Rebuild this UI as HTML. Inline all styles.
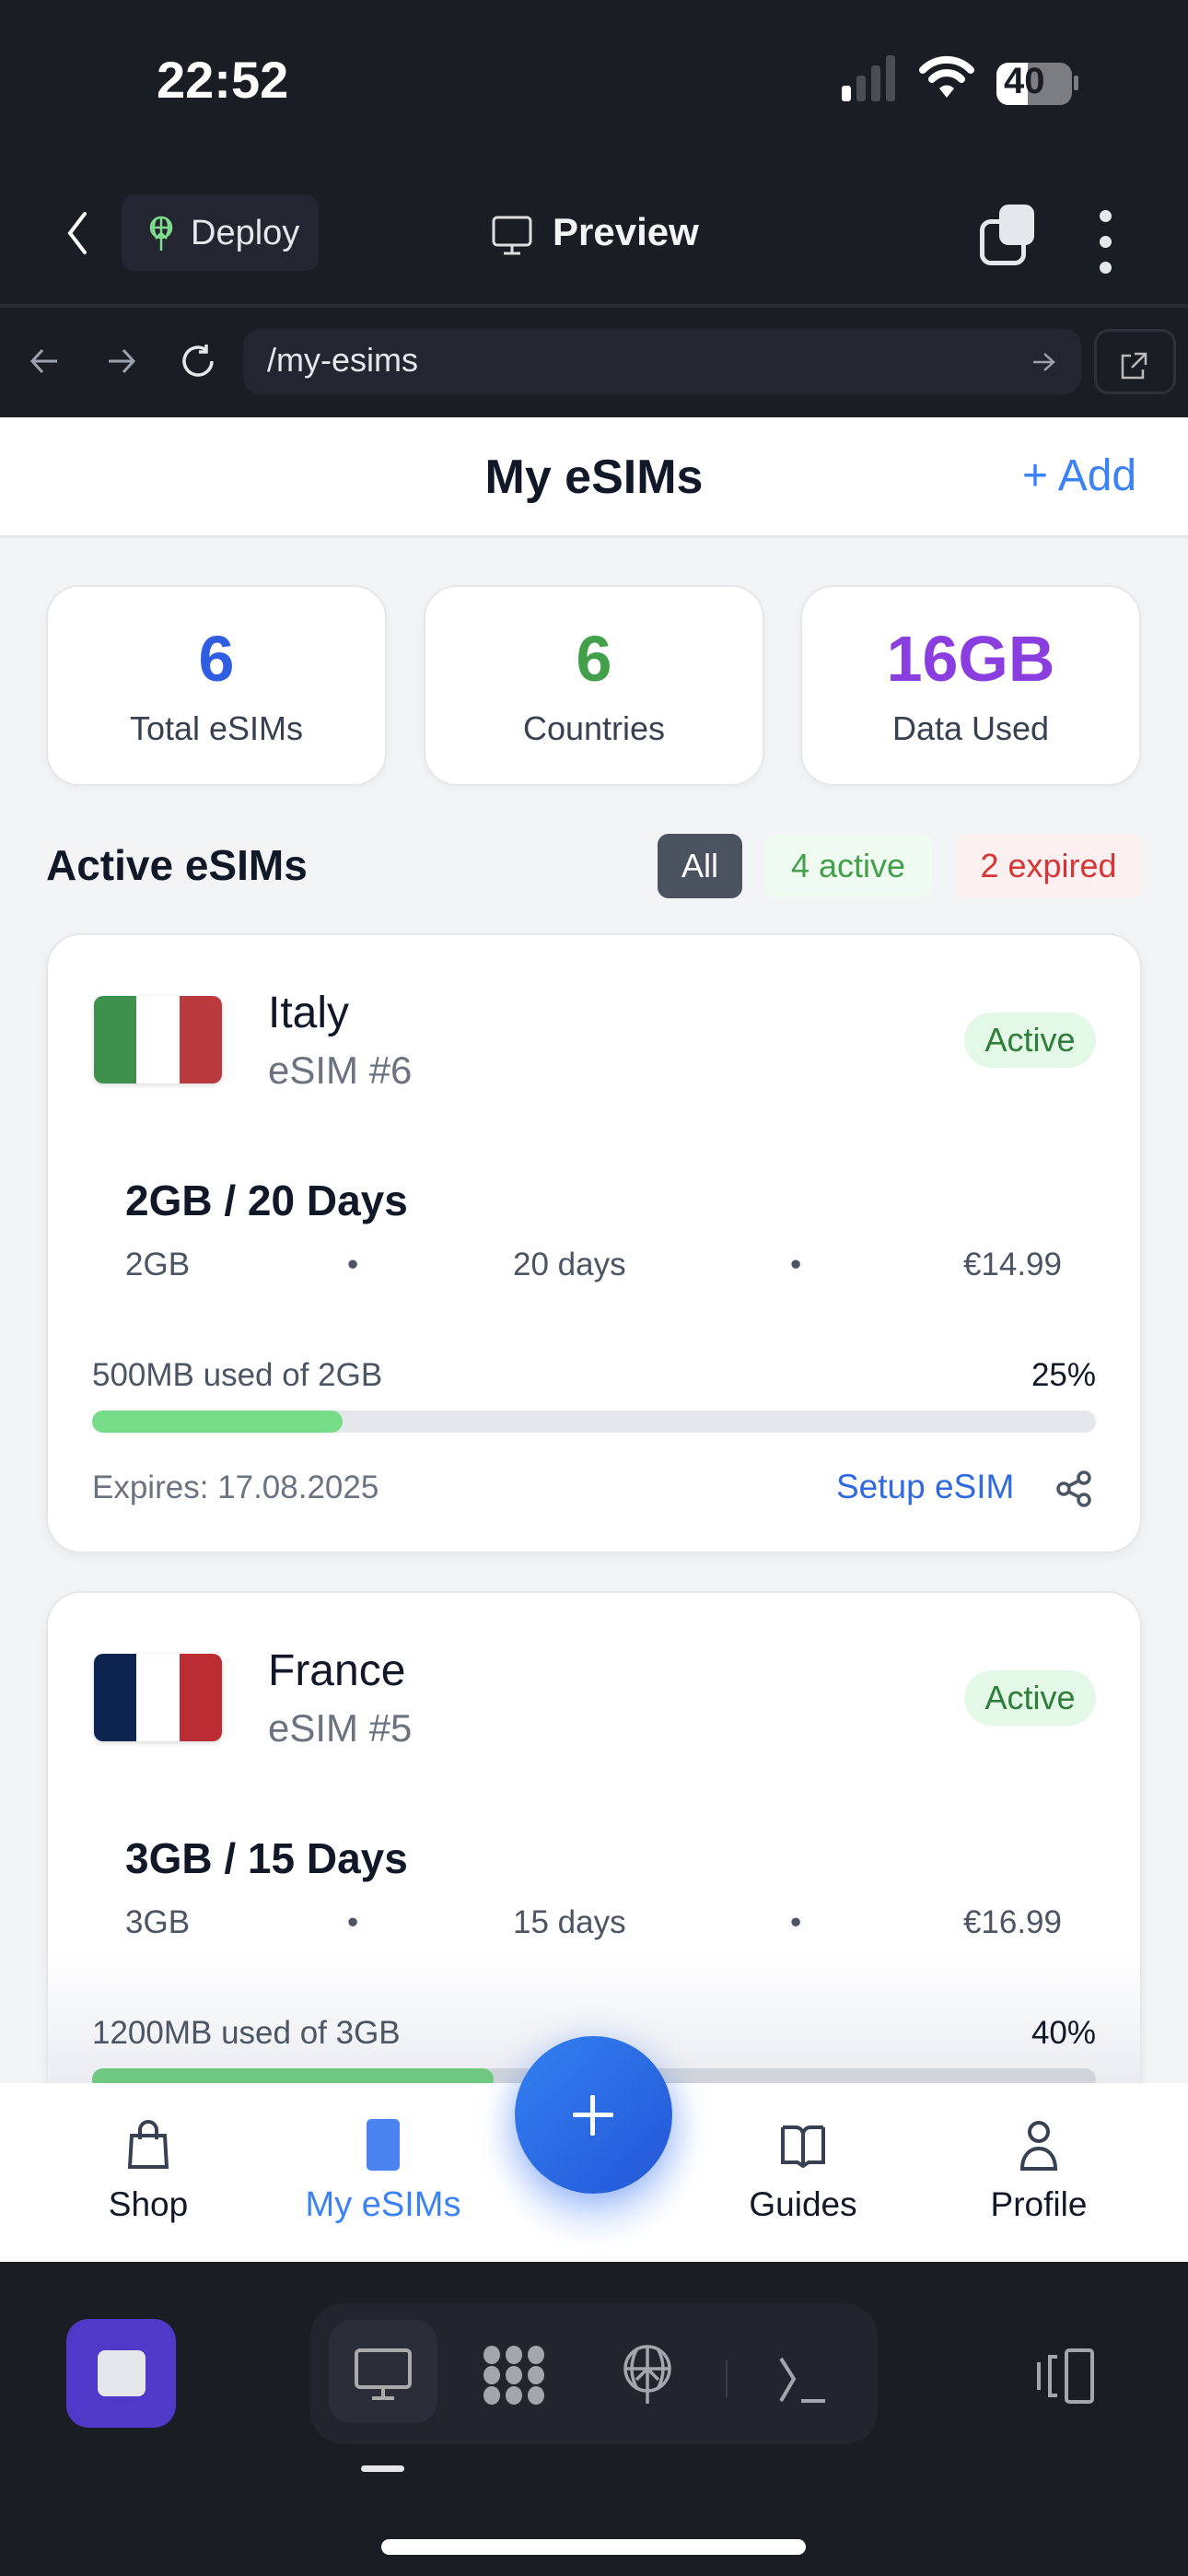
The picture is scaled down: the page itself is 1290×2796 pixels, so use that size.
<!DOCTYPE html>
<html><head><meta charset="utf-8"><style>
*{margin:0;padding:0;box-sizing:border-box}
body{width:1290px;height:2796px;position:relative;overflow:hidden;background:#f3f4f6;font-family:"Liberation Sans",sans-serif;}
.a{position:absolute}
.dark{background:#1b1d25}
.card{position:absolute;background:#fff;border:2px solid #e5e7eb;border-radius:38px;box-shadow:0 4px 14px rgba(0,0,0,.05)}
.stat{position:absolute;top:635px;width:370px;height:218px;background:#fff;border:2px solid #e5e7eb;border-radius:36px;text-align:center;box-shadow:0 3px 10px rgba(0,0,0,.04)}
.stat .n{position:absolute;top:38px;width:100%;font-size:70px;font-weight:bold;line-height:80px}
.stat .l{position:absolute;top:132px;width:100%;font-size:36px;color:#374151;line-height:44px}
.t{position:absolute;white-space:nowrap}
</style></head><body>
<!-- top dark -->
<div class="a dark" style="left:0;top:0;width:1290px;height:453px"></div>
<div class="t" style="left:170px;top:54px;font-size:56px;font-weight:bold;color:#fff">22:52</div>
<!-- signal -->
<div class="a" style="left:914px;top:93px;width:10px;height:17px;background:#fff;border-radius:3px"></div>
<div class="a" style="left:930px;top:82px;width:10px;height:28px;background:#4b4d55;border-radius:3px"></div>
<div class="a" style="left:946px;top:71px;width:10px;height:39px;background:#4b4d55;border-radius:3px"></div>
<div class="a" style="left:962px;top:60px;width:10px;height:50px;background:#4b4d55;border-radius:3px"></div>
<svg class="a" style="left:998px;top:58px" width="60" height="50" viewBox="0 0 60 50"><path d="M4 18 A36 36 0 0 1 56 18" stroke="#fff" stroke-width="8" fill="none" stroke-linecap="round"/><path d="M14 28 A22 22 0 0 1 46 28" stroke="#fff" stroke-width="8" fill="none" stroke-linecap="round"/><path d="M22 38 L30 48 L38 38 A11 11 0 0 0 22 38Z" fill="#fff"/></svg>
<div class="a" style="left:1082px;top:68px;width:82px;height:46px;background:#7c7d82;border-radius:13px;overflow:hidden"><div style="width:34px;height:100%;background:#fff"></div></div>
<div class="a" style="left:1166px;top:82px;width:5px;height:16px;background:#7c7d82;border-radius:2px"></div>
<div class="t" style="left:1090px;top:66px;font-size:40px;font-weight:bold;color:#1b1d25">40</div>
<!-- toolbar -->
<svg class="a" style="left:68px;top:228px" width="30" height="50" viewBox="0 0 30 50"><path d="M24 4 L8 25 L24 46" stroke="#fff" stroke-width="4" fill="none" stroke-linecap="round"/></svg>
<div class="a" style="left:132px;top:211px;width:214px;height:83px;background:#242731;border-radius:14px"></div>
<svg class="a" style="left:160px;top:233px" width="30" height="44" viewBox="0 0 30 44"><g stroke="#7ee08f" stroke-width="2.5" fill="none"><circle cx="15" cy="14" r="11"/><path d="M4 14h22M15 3v36M9 5c-3 6-3 12 0 18M21 5c3 6 3 12 0 18M9 26l6-6 6 6"/></g></svg>
<div class="t" style="left:207px;top:232px;font-size:38px;color:#e5e7eb">Deploy</div>
<svg class="a" style="left:533px;top:233px" width="46" height="46" viewBox="0 0 46 46"><g stroke="#ddd" stroke-width="3" fill="none"><rect x="3" y="3" width="40" height="30" rx="4"/><path d="M23 33v8M14 42h18"/></g></svg>
<div class="t" style="left:600px;top:228px;font-size:42px;font-weight:bold;color:#f3f4f6">Preview</div>
<div class="a" style="left:1064px;top:238px;width:50px;height:50px;border:5px solid #e5e7eb;border-radius:12px"></div>
<div class="a" style="left:1085px;top:222px;width:38px;height:44px;background:#e5e7eb;border-radius:10px"></div>
<div class="a" style="left:1194px;top:228px;width:13px;height:13px;background:#e5e7eb;border-radius:50%"></div>
<div class="a" style="left:1194px;top:256px;width:13px;height:13px;background:#e5e7eb;border-radius:50%"></div>
<div class="a" style="left:1194px;top:284px;width:13px;height:13px;background:#e5e7eb;border-radius:50%"></div>
<div class="a" style="left:0;top:330px;width:1290px;height:4px;background:#2a2d36"></div>
<!-- url bar -->
<svg class="a" style="left:30px;top:372px" width="40" height="40" viewBox="0 0 40 40"><path d="M32 20H6M16 8L5 20l11 12" stroke="#9ca3af" stroke-width="3" fill="none"/></svg>
<svg class="a" style="left:112px;top:372px" width="40" height="40" viewBox="0 0 40 40"><path d="M6 20h26M22 8l11 12-11 12" stroke="#9ca3af" stroke-width="3" fill="none"/></svg>
<svg class="a" style="left:194px;top:370px" width="44" height="44" viewBox="0 0 44 44"><path d="M36 22A15 15 0 1 1 30 10M30 4v8h-8" stroke="#e5e7eb" stroke-width="3.5" fill="none"/></svg>
<div class="a" style="left:264px;top:357px;width:910px;height:71px;background:#242731;border-radius:18px"></div>
<div class="t" style="left:290px;top:370px;font-size:36px;color:#e5e7eb">/my-esims</div>
<svg class="a" style="left:1120px;top:380px" width="26" height="26" viewBox="0 0 26 26"><path d="M2 13h22M14 4l10 9-10 9" stroke="#9ca3af" stroke-width="2.5" fill="none"/></svg>
<div class="a" style="left:1188px;top:357px;width:89px;height:71px;border:3px solid #2e313b;border-radius:16px"></div>
<svg class="a" style="left:1214px;top:380px" width="34" height="34" viewBox="0 0 34 34"><path d="M14 6H5v24h22v-9M18 4h12v12M30 4L15 19" stroke="#bbb" stroke-width="2.5" fill="none"/></svg>
<!-- header -->
<div class="a" style="left:0;top:453px;width:1290px;height:131px;background:#fff;border-bottom:3px solid #e5e7eb"></div>
<div class="t" style="left:0;width:1290px;text-align:center;top:488px;font-size:52px;font-weight:bold;color:#111827">My eSIMs</div>
<div class="t" style="left:1110px;top:489px;font-size:48px;color:#3b82f6">+ Add</div>
<!-- stats -->
<div class="stat" style="left:50px"><div class="n" style="color:#2f5fe0">6</div><div class="l">Total eSIMs</div></div>
<div class="stat" style="left:460px"><div class="n" style="color:#43a04a">6</div><div class="l">Countries</div></div>
<div class="stat" style="left:869px"><div class="n" style="color:#8a3ee0">16GB</div><div class="l">Data Used</div></div>
<!-- section -->
<div class="t" style="left:50px;top:912px;font-size:46px;font-weight:bold;color:#111827">Active eSIMs</div>
<div class="a" style="left:714px;top:905px;width:92px;height:70px;background:#4b5260;border-radius:12px;color:#fff;font-size:36px;text-align:center;line-height:70px">All</div>
<div class="a" style="left:830px;top:905px;width:182px;height:70px;background:#effaf1;border-radius:12px;color:#43a04a;font-size:36px;text-align:center;line-height:70px">4 active</div>
<div class="a" style="left:1037px;top:905px;width:203px;height:70px;background:#fdf0f0;border-radius:12px;color:#d63636;font-size:36px;text-align:center;line-height:70px">2 expired</div>
<!-- card 1 -->
<div class="card" style="left:50px;top:1013px;width:1190px;height:673px"></div>
<div class="a" style="left:102px;top:1081px;width:139px;height:95px;border-radius:10px;overflow:hidden;display:flex;box-shadow:0 2px 6px rgba(0,0,0,.15)"><div style="flex:1;background:#3f8f4d"></div><div style="flex:1;background:#fff"></div><div style="flex:1;background:#bb3a3d"></div></div>
<div class="t" style="left:291px;top:1072px;font-size:48px;color:#111827">Italy</div>
<div class="t" style="left:291px;top:1138px;font-size:42px;color:#6b7280">eSIM #6</div>
<div class="a" style="left:1047px;top:1099px;width:143px;height:60px;background:#e3f8e6;border-radius:30px;color:#2e7d3a;font-size:36px;text-align:center;line-height:60px">Active</div>
<div class="t" style="left:136px;top:1276px;font-size:46px;font-weight:bold;color:#111827">2GB / 20 Days</div>
<div class="t" style="left:136px;top:1353px;font-size:35px;color:#4b5563">2GB</div>
<div class="t" style="left:377px;top:1353px;font-size:35px;color:#4b5563">•</div>
<div class="t" style="left:557px;top:1353px;font-size:35px;color:#4b5563">20 days</div>
<div class="t" style="left:858px;top:1353px;font-size:35px;color:#4b5563">•</div>
<div class="t" style="left:1040px;width:113px;text-align:right;top:1353px;font-size:35px;color:#4b5563">€14.99</div>
<div class="t" style="left:100px;top:1473px;font-size:35px;color:#4b5563">500MB used of 2GB</div>
<div class="t" style="left:1100px;width:90px;text-align:right;top:1473px;font-size:35px;color:#111827">25%</div>
<div class="a" style="left:100px;top:1531px;width:1090px;height:24px;background:#e5e7eb;border-radius:12px"><div style="width:272px;height:100%;background:#77dc88;border-radius:12px"></div></div>
<div class="t" style="left:100px;top:1595px;font-size:35px;color:#6b7280">Expires: 17.08.2025</div>
<div class="t" style="left:908px;top:1593px;font-size:37px;color:#2f6ae0">Setup eSIM</div>
<svg class="a" style="left:1146px;top:1596px" width="42" height="40" viewBox="0 0 42 40"><g stroke="#4b5563" stroke-width="3.5" fill="none"><circle cx="31" cy="8" r="6"/><circle cx="9" cy="20" r="6"/><circle cx="31" cy="32" r="6"/><path d="M14 17l12-6M14 23l12 6"/></g></svg>
<!-- card 2 -->
<div class="card" style="left:50px;top:1727px;width:1190px;height:673px"></div>
<div class="a" style="left:52px;top:2120px;width:1186px;height:141px;background:linear-gradient(rgba(243,244,246,0),rgba(232,234,239,.9))"></div>
<div class="a" style="left:102px;top:1795px;width:139px;height:95px;border-radius:10px;overflow:hidden;display:flex;box-shadow:0 2px 6px rgba(0,0,0,.15)"><div style="flex:1;background:#0d2450"></div><div style="flex:1;background:#fff"></div><div style="flex:1;background:#bb2d33"></div></div>
<div class="t" style="left:291px;top:1786px;font-size:48px;color:#111827">France</div>
<div class="t" style="left:291px;top:1852px;font-size:42px;color:#6b7280">eSIM #5</div>
<div class="a" style="left:1047px;top:1813px;width:143px;height:60px;background:#e3f8e6;border-radius:30px;color:#2e7d3a;font-size:36px;text-align:center;line-height:60px">Active</div>
<div class="t" style="left:136px;top:1990px;font-size:46px;font-weight:bold;color:#111827">3GB / 15 Days</div>
<div class="t" style="left:136px;top:2067px;font-size:35px;color:#4b5563">3GB</div>
<div class="t" style="left:377px;top:2067px;font-size:35px;color:#4b5563">•</div>
<div class="t" style="left:557px;top:2067px;font-size:35px;color:#4b5563">15 days</div>
<div class="t" style="left:858px;top:2067px;font-size:35px;color:#4b5563">•</div>
<div class="t" style="left:1040px;width:113px;text-align:right;top:2067px;font-size:35px;color:#4b5563">€16.99</div>
<div class="t" style="left:100px;top:2187px;font-size:35px;color:#4b5563">1200MB used of 3GB</div>
<div class="t" style="left:1100px;width:90px;text-align:right;top:2187px;font-size:35px;color:#111827">40%</div>
<div class="a" style="left:100px;top:2245px;width:1090px;height:24px;background:#d1d5db;border-radius:12px"><div style="width:436px;height:100%;background:#6fc982;border-radius:12px"></div></div>
<!-- bottom nav -->
<div class="a" style="left:0;top:2261px;width:1290px;height:194px;background:#fff"></div>
<div class="a" style="left:520px;top:2260px;width:250px;height:195px;background:radial-gradient(ellipse at 50% 30%,rgba(59,130,246,.28),rgba(59,130,246,0) 65%)"></div>
<svg class="a" style="left:138px;top:2300px" width="46" height="56" viewBox="0 0 46 56"><g stroke="#374151" stroke-width="4" fill="none"><path d="M5 18h36l2 34H3z"/><path d="M14 22V12a9 9 0 0 1 18 0v10"/></g></svg>
<div class="a" style="left:398px;top:2300px;width:36px;height:56px;background:#4b84f0;border-radius:5px"></div>
<svg class="a" style="left:846px;top:2303px" width="52" height="50" viewBox="0 0 52 50"><g stroke="#374151" stroke-width="4" fill="none"><path d="M26 10v36M4 6h14a8 8 0 0 1 8 8M48 6H34a8 8 0 0 0-8 8M4 6v38h16l6 4 6-4h16V6"/></g></svg>
<svg class="a" style="left:1106px;top:2300px" width="44" height="56" viewBox="0 0 44 56"><g stroke="#374151" stroke-width="4" fill="none"><circle cx="22" cy="14" r="10"/><path d="M4 54c0-14 8-22 18-22s18 8 18 22z"/></g></svg>
<div class="t" style="left:0;width:322px;text-align:center;top:2372px;font-size:37px;color:#111827">Shop</div>
<div class="t" style="left:256px;width:320px;text-align:center;top:2372px;font-size:38px;color:#3b82f6">My eSIMs</div>
<div class="t" style="left:712px;width:320px;text-align:center;top:2372px;font-size:37px;color:#111827">Guides</div>
<div class="t" style="left:968px;width:320px;text-align:center;top:2372px;font-size:37px;color:#111827">Profile</div>
<div class="a" style="left:559px;top:2210px;width:171px;height:171px;border-radius:50%;background:linear-gradient(135deg,#3380f2,#2356d6);box-shadow:0 10px 40px rgba(37,99,235,.45)"></div>
<div class="a" style="left:622px;top:2293px;width:44px;height:5px;background:#fff;border-radius:2px"></div>
<div class="a" style="left:641px;top:2274px;width:5px;height:44px;background:#fff;border-radius:2px"></div>
<!-- bottom dark -->
<div class="a dark" style="left:0;top:2455px;width:1290px;height:341px"></div>
<div class="a" style="left:72px;top:2517px;width:119px;height:118px;background:#5038c8;border-radius:24px"></div>
<div class="a" style="left:106px;top:2551px;width:52px;height:50px;background:#e5e7eb;border-radius:8px"></div>
<div class="a" style="left:337px;top:2500px;width:616px;height:153px;background:#22252e;border-radius:36px"></div>
<div class="a" style="left:357px;top:2518px;width:118px;height:112px;background:#2b2e38;border-radius:24px"></div>
<svg class="a" style="left:384px;top:2548px" width="64" height="60" viewBox="0 0 64 60"><g stroke="#aaa" stroke-width="4" fill="none"><rect x="3" y="3" width="58" height="40" rx="4"/><path d="M32 43v10M20 55h24"/></g></svg>
<svg class="a" style="left:522px;top:2546px" width="72" height="64" viewBox="0 0 72 64"><g fill="#a3a6ad"><ellipse cx="12" cy="10" rx="9" ry="10"/><ellipse cx="36" cy="10" rx="9" ry="10"/><ellipse cx="60" cy="10" rx="9" ry="10"/><ellipse cx="12" cy="32" rx="9" ry="10"/><ellipse cx="36" cy="32" rx="9" ry="10"/><ellipse cx="60" cy="32" rx="9" ry="10"/><ellipse cx="12" cy="54" rx="9" ry="10"/><ellipse cx="36" cy="54" rx="9" ry="10"/><ellipse cx="60" cy="54" rx="9" ry="10"/></g></svg>
<svg class="a" style="left:674px;top:2545px" width="58" height="66" viewBox="0 0 58 66"><g stroke="#a3a6ad" stroke-width="3.5" fill="none"><circle cx="29" cy="26" r="24"/><path d="M5 26h48M29 2v62M18 4c-8 14-8 30 0 44M40 4c8 14 8 30 0 44M17 38l12-12 12 12"/></g></svg>
<div class="a" style="left:788px;top:2562px;width:2px;height:40px;background:#3a3d47"></div>
<svg class="a" style="left:844px;top:2556px" width="58" height="56" viewBox="0 0 58 56"><g stroke="#a3a6ad" stroke-width="4" fill="none"><path d="M4 4l14 22L4 50"/><path d="M26 50h26"/></g></svg>
<svg class="a" style="left:1120px;top:2548px" width="72" height="62" viewBox="0 0 72 62"><g stroke="#a3a6ad" stroke-width="4" fill="none"><rect x="38" y="3" width="28" height="56" rx="3"/><path d="M28 10h-8v42h8M8 16v30"/></g></svg>
<div class="a" style="left:392px;top:2676px;width:47px;height:7px;background:#e5e7eb;border-radius:4px"></div>
<div class="a" style="left:414px;top:2756px;width:461px;height:17px;background:#fff;border-radius:9px"></div>
</body></html>
